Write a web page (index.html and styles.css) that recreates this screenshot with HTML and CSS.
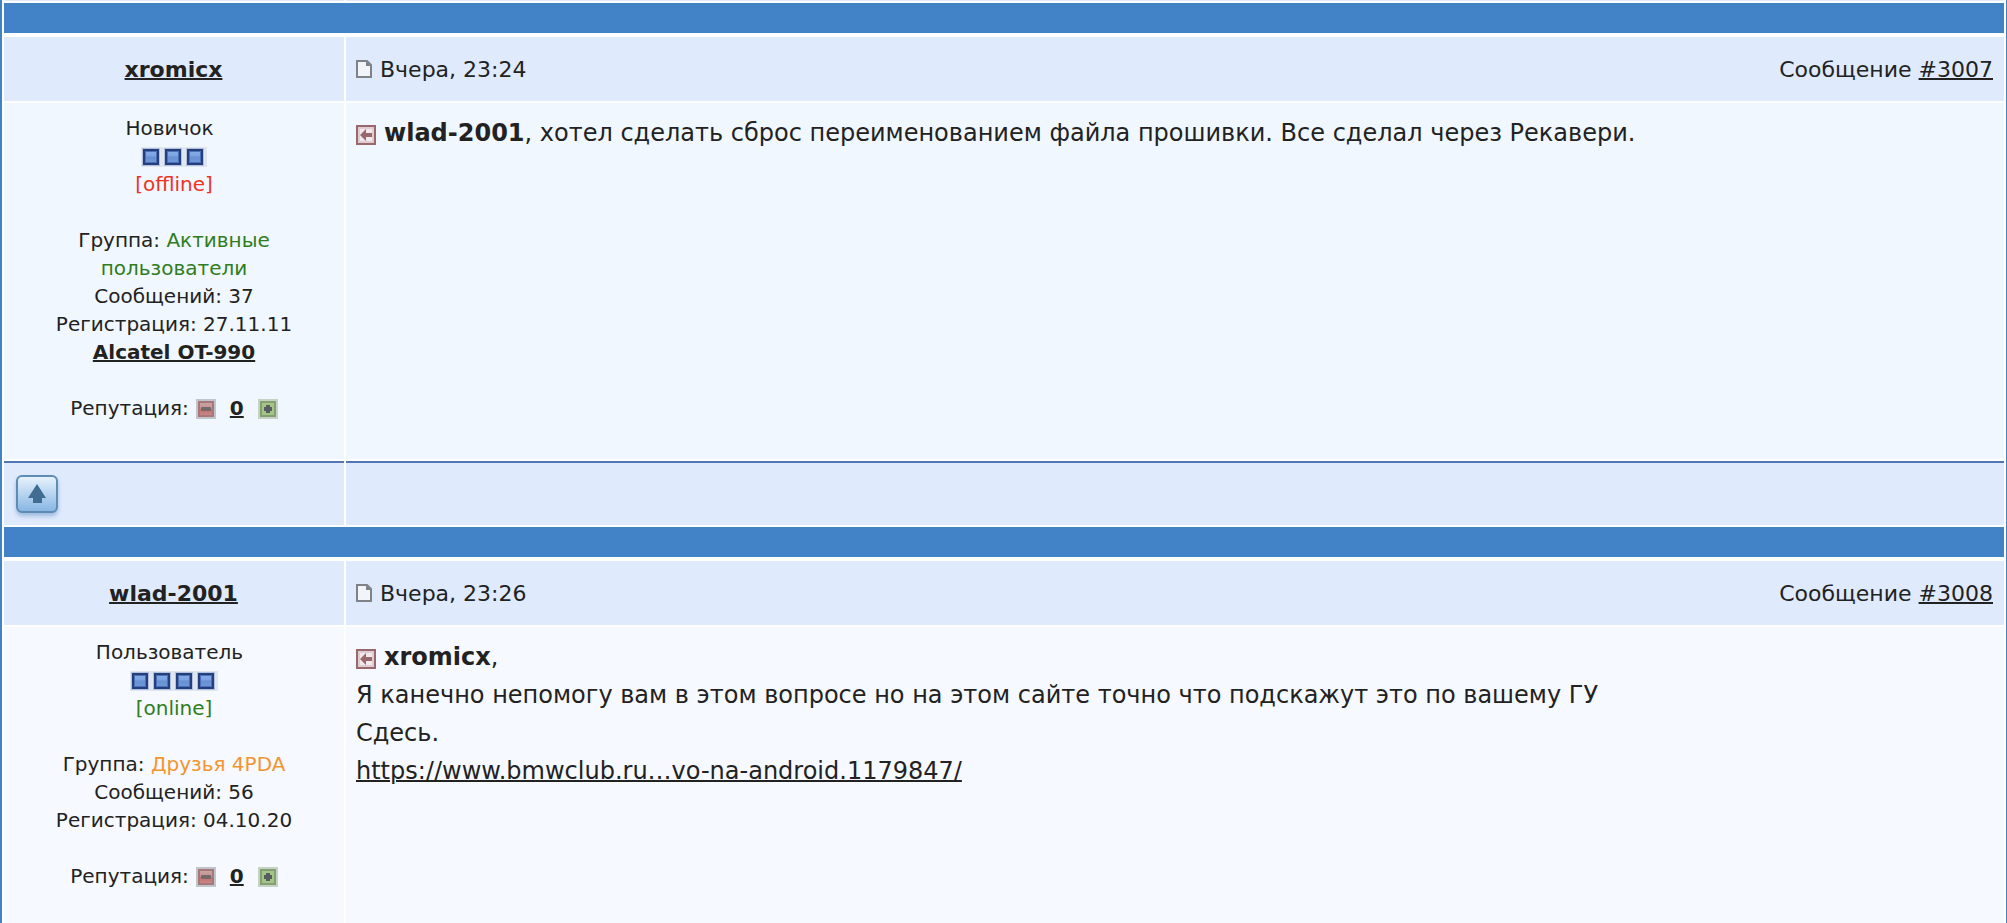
FILE: index.html
```
<!DOCTYPE html>
<html lang="ru">
<head>
    <meta charset="UTF-8">
    <meta name="viewport" content="width=device-width, initial-scale=1.0">
    <title>4PDA - Форум</title>
    <link rel="stylesheet" href="styles.css">
</head>
<body>
    <!-- Shared icons -->
    <svg class="sprite" aria-hidden="true">
        <defs>
            <linearGradient id="pipFill" x1="0" y1="0" x2="0" y2="1">
                <stop offset="0" stop-color="#86aae8"/>
                <stop offset="0.4" stop-color="#7ba2e0"/>
                <stop offset="0.5" stop-color="#6790d2"/>
                <stop offset="1" stop-color="#6f98da"/>
            </linearGradient>
            <linearGradient id="upFill" x1="0" y1="0" x2="0" y2="1">
                <stop offset="0" stop-color="#e9f4fd"/>
                <stop offset="1" stop-color="#86b4e2"/>
            </linearGradient>
            <linearGradient id="minusFill" x1="0" y1="0" x2="0" y2="1">
                <stop offset="0" stop-color="#cda5a5"/>
                <stop offset="0.5" stop-color="#c59090"/>
                <stop offset="0.5" stop-color="#c86c6c"/>
                <stop offset="1" stop-color="#c68c8c"/>
            </linearGradient>
        </defs>
        <symbol id="pip" viewBox="0 0 22 20">
            <rect width="22" height="20" fill="#dfe6f0"/>
            <rect x="1" y="1" width="18" height="18" fill="#b4c1dc"/>
            <rect x="2" y="2" width="16" height="16" fill="#233f7e"/>
            <rect x="4" y="4" width="12" height="12" fill="#4c70b4"/>
            <rect x="5" y="5" width="10" height="10" fill="url(#pipFill)"/>
        </symbol>
        <symbol id="page" viewBox="0 0 16 18">
            <path d="M1 1h10l4 4v12H1z" fill="#f1f5fa" stroke="#7f8388" stroke-width="2"/>
            <path d="M10 1v5h5z" fill="#7f8388"/>
        </symbol>
        <symbol id="back" viewBox="0 0 20 20">
            <rect x="1" y="1" width="18" height="18" fill="#f2e9ec" stroke="#99686c" stroke-width="2"/>
            <rect x="3" y="3" width="14" height="14" fill="none" stroke="#e0cdd1" stroke-width="2"/>
            <path d="M4 10l6-6v4h6v4h-6v4z" fill="#99686c"/>
        </symbol>
        <symbol id="minus" viewBox="0 0 20 20">
            <rect width="20" height="20" fill="#c0c4cc"/>
            <rect x="3" y="3" width="14" height="14" fill="url(#minusFill)" stroke="#a87878" stroke-width="2"/>
            <rect x="5" y="8" width="10" height="4" rx="1" fill="#75686a"/>
        </symbol>
        <symbol id="plus" viewBox="0 0 20 20">
            <rect width="20" height="20" fill="#c6d2c4"/>
            <rect x="3" y="3" width="14" height="14" fill="#a3c585" stroke="#849f71" stroke-width="2"/>
            <path d="M8 6h4v2h2v4h-2v2H8v-2H6V8h2z" fill="#565c5f"/>
        </symbol>
        <symbol id="up" viewBox="0 0 42 38">
            <rect x="1" y="1" width="40" height="36" rx="5" fill="url(#upFill)" stroke="#5e8cb2" stroke-width="2"/>
            <path d="M21 9l9 14h-4v5h-9v-5h-5z" fill="#416d92"/>
        </symbol>
    </svg>

    <div class="forum">
        <div class="row row-cut">
            <div></div>
            <div></div>
        </div>

        <!-- Post 3007 -->
        <div class="bar"></div>
        <article class="post">
            <div class="row row-head">
                <div class="author"><a href="#">xromicx</a></div>
                <div class="post-head">
                    <span class="date"><svg class="icon-page"><use href="#page"/></svg>Вчера, 23:24</span>
                    <span>Сообщение <a href="#">#3007</a></span>
                </div>
            </div>
            <div class="row row-body">
                <div class="info">
                    <p class="rank">Новичок</p>
                    <p class="pips"><svg><use href="#pip"/></svg><svg><use href="#pip"/></svg><svg><use href="#pip"/></svg></p>
                    <p class="offline">[offline]</p>
                    <br>
                    <p>Группа: <span class="group-active">Активные</span></p>
                    <p class="group-active">пользователи</p>
                    <p>Сообщений: 37</p>
                    <p>Регистрация: 27.11.11</p>
                    <p><a class="device" href="#">Alcatel OT-990</a></p>
                    <br>
                    <p class="rep">Репутация: <a href="#" aria-label="Понизить"><svg><use href="#minus"/></svg></a><a class="rep-value" href="#">0</a><a href="#" aria-label="Повысить"><svg><use href="#plus"/></svg></a></p>
                    <br>
                </div>
                <div class="text">
                    <p><a href="#" aria-label="Перейти к сообщению"><svg class="icon-back"><use href="#back"/></svg></a><b>wlad-2001</b>, хотел сделать сброс переименованием файла прошивки. Все сделал через Рекавери.</p>
                </div>
            </div>
            <div class="row row-foot">
                <div><a class="up" href="#" aria-label="Вверх"><svg><use href="#up"/></svg></a></div>
                <div></div>
            </div>
        </article>

        <!-- Post 3008 -->
        <div class="bar"></div>
        <article class="post post-alt">
            <div class="row row-head">
                <div class="author"><a href="#">wlad-2001</a></div>
                <div class="post-head">
                    <span class="date"><svg class="icon-page"><use href="#page"/></svg>Вчера, 23:26</span>
                    <span>Сообщение <a href="#">#3008</a></span>
                </div>
            </div>
            <div class="row row-body">
                <div class="info">
                    <p class="rank">Пользователь</p>
                    <p class="pips"><svg><use href="#pip"/></svg><svg><use href="#pip"/></svg><svg><use href="#pip"/></svg><svg><use href="#pip"/></svg></p>
                    <p class="online">[online]</p>
                    <br>
                    <p>Группа: <span class="group-friend">Друзья 4PDA</span></p>
                    <p>Сообщений: 56</p>
                    <p>Регистрация: 04.10.20</p>
                    <br>
                    <p class="rep">Репутация: <a href="#" aria-label="Понизить"><svg><use href="#minus"/></svg></a><a class="rep-value" href="#">0</a><a href="#" aria-label="Повысить"><svg><use href="#plus"/></svg></a></p>
                </div>
                <div class="text">
                    <p><a href="#" aria-label="Перейти к сообщению"><svg class="icon-back"><use href="#back"/></svg></a><b>xromicx</b>,</p>
                    <p>Я канечно непомогу вам в этом вопросе но на этом сайте точно что подскажут это по вашему ГУ</p>
                    <p>Сдесь.</p>
                    <p><a href="#">https://www.bmwclub.ru…vo-na-android.1179847/</a></p>
                </div>
            </div>
        </article>
    </div>
</body>
</html>
```
FILE: styles.css
```
* {
    margin: 0;
    padding: 0;
    box-sizing: border-box;
}

body {
    background: #fff;
    color: #222;
    font-family: Verdana, "DejaVu Sans", sans-serif;
    font-size: 22px;
}

a {
    color: #222;
    text-decoration-thickness: 2px;
}

.sprite {
    position: absolute;
    width: 0;
    height: 0;
}

.forum {
    display: flex;
    flex-direction: column;
    min-height: 100vh;
    padding: 0 2px;
    border-left: 2px solid #4282c7;
    border-right: 1px solid #4282c7;
}

.bar {
    height: 30px;
    margin: 2px 0 4px;
    background: #4282c6;
}

/* Author column + message column */
.row {
    display: grid;
    grid-template-columns: 340px 1fr;
    gap: 2px;
}

.row > div {
    background: #dfeafd;
}

.row-cut > div {
    height: 1px;
}

.post {
    display: flex;
    flex-direction: column;
    gap: 2px;
}

.post-alt {
    flex: 1;
}

.post-alt .row-body {
    flex: 1;
}

.row-head > div {
    display: flex;
    align-items: center;
    height: 64px;
    padding: 0 11px 0 10px;
}

.author {
    justify-content: center;
    font-weight: bold;
}

.post-head {
    justify-content: space-between;
}

.date {
    display: flex;
    align-items: center;
    gap: 8px;
}

.icon-page {
    width: 16px;
    height: 18px;
}

.row-body > div {
    background: #f0f7ff;
}

.post-alt .row-body > div {
    background: #f6f9ff;
}

/* Author details */
.row-body .info {
    padding: 11px 10px 9px;
    font-size: 20px;
    line-height: 28px;
    text-align: center;
}

.rank {
    padding-right: 9px;
}

.pips {
    display: flex;
    justify-content: center;
    align-items: center;
    height: 28px;
    padding-top: 2px;
}

.pips svg {
    width: 22px;
    height: 20px;
}

.offline {
    color: #ee3322;
}

.online,
.group-active {
    color: #2f7d1c;
}

.group-friend {
    color: #f39530;
}

.device,
.rep-value {
    font-weight: bold;
}

.rep {
    display: flex;
    justify-content: center;
    align-items: center;
}

.rep a {
    margin-left: 14px;
}

.rep a:first-of-type {
    margin-left: 7px;
}

.rep svg {
    display: block;
    width: 20px;
    height: 20px;
    margin-top: 2px;
}

/* Message text */
.row-body .text {
    padding: 11px 10px;
    font-size: 24px;
    line-height: 38px;
}

.icon-back {
    width: 20px;
    height: 20px;
    margin-right: 8px;
    vertical-align: -4px;
}

.row-foot > div {
    height: 64px;
    padding: 12px;
    border-top: 2px solid #5176b5;
}

.up svg {
    display: block;
    width: 42px;
    height: 38px;
    filter: drop-shadow(0 3px 2px #9db9dc);
}
```
